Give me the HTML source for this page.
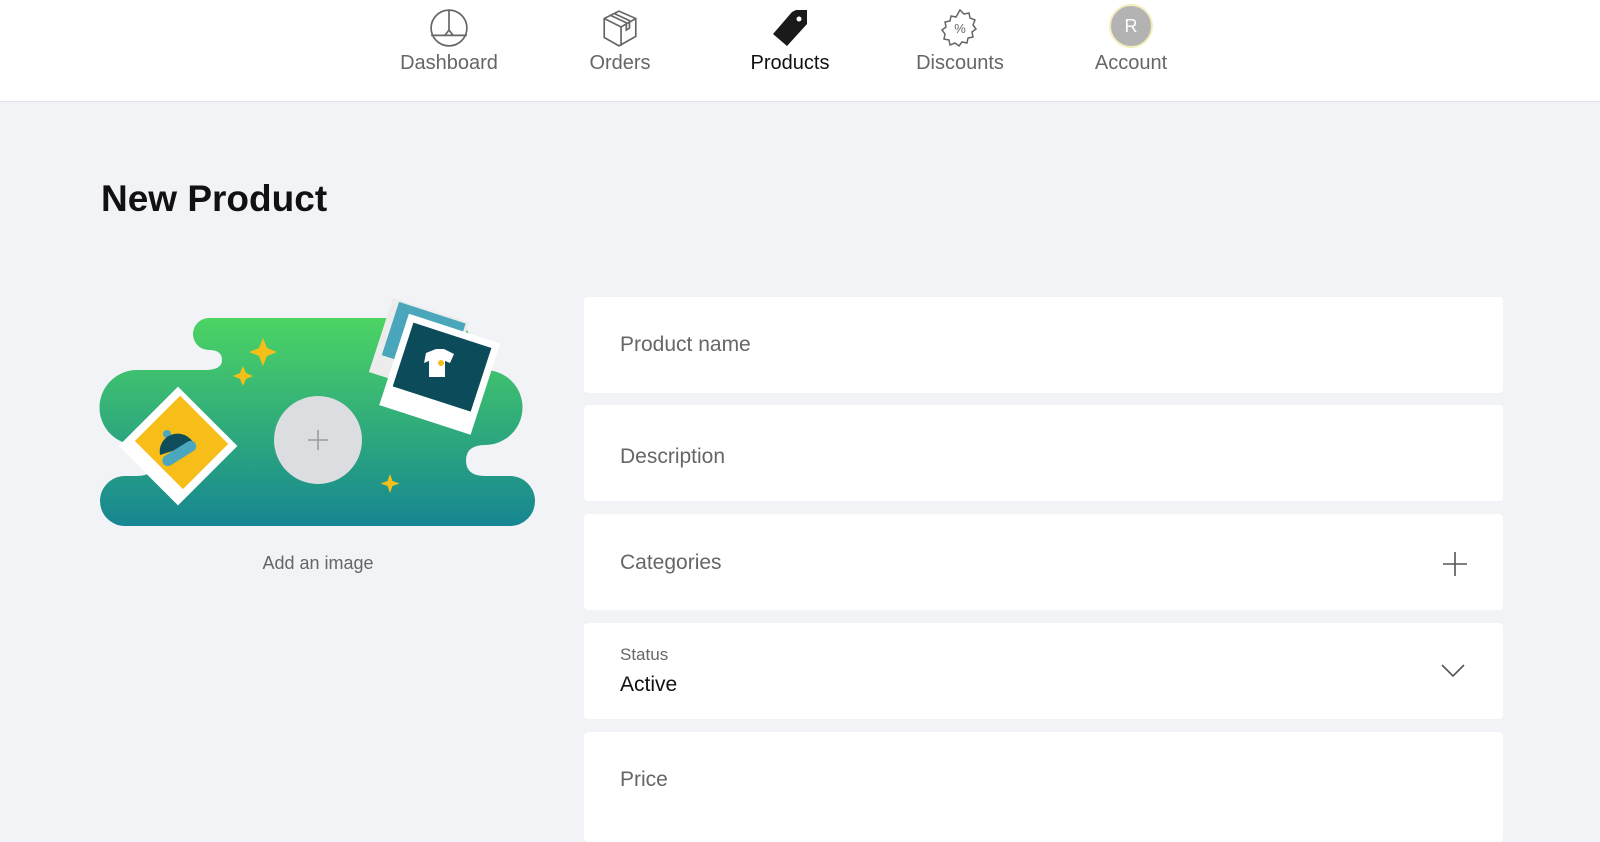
<!DOCTYPE html>
<html><head><meta charset="utf-8"><style>
*{margin:0;padding:0;box-sizing:border-box}
body{width:1600px;height:829px;overflow:hidden;background:#f1f3f6;font-family:"Liberation Sans",sans-serif;position:relative}
.nav{position:absolute;left:0;top:0;width:1600px;height:102px;background:#fff;border-bottom:1px solid #dfe2e6}
.ni{position:absolute;top:0;width:170px;text-align:center;font-size:20px;color:#666}
.ni svg{position:absolute;left:65px;top:8px}
.ni span{position:absolute;top:52px;left:0;width:170px}
h1{position:absolute;left:101px;top:178px;font-size:37px;font-weight:bold;color:#111}
.card{position:absolute;left:584px;width:919px;background:#fff;border-radius:4px}
.lbl{position:absolute;left:36px;font-size:21px;color:#666}
</style></head><body>
<div class="nav">
 <div class="ni" style="left:364px"><svg width="40" height="40" viewBox="0 0 38 38" fill="none" stroke="#666" stroke-width="1.6"><circle cx="19" cy="19" r="17"/><path d="M19 2v7M19 9v12M15 26l4-5 4 5M2 26h34"/></svg><span>Dashboard</span></div>
 <div class="ni" style="left:535px"><svg width="40" height="40" viewBox="0 0 38 38" fill="none" stroke="#666" stroke-width="1.6"><path d="M4 10l14-7 16 7v17l-16 9-14-8z M4 10l16 8 14-8 M20 18v18 M10 7l15 7v7l3-2v-7L13 5"/></svg><span>Orders</span></div>
 <div class="ni" style="left:705px"><svg width="40" height="40" viewBox="0 0 40 40"><path d="M26 2h11v14L17 38 3 26 22 4z" fill="#1a1a1a"/><circle cx="29" cy="11" r="2.5" fill="#fff"/></svg><span style="color:#111">Products</span></div>
 <div class="ni" style="left:875px"><svg width="40" height="40" viewBox="0 0 40 40" fill="none" stroke="#666" stroke-width="1.5"><path d="M20 2l4 4 5-1 1 5 5 2-2 5 3 4-4 3 1 5-5 1-1 5-5-1-3 4-4-3-5 2-1-5-5-1 1-5-3-4 4-3-1-5 5-1 1-5 5 1z"/><text x="20" y="25" font-size="13" text-anchor="middle" fill="#666" stroke="none" font-family="Liberation Sans">%</text></svg><span>Discounts</span></div>
 <div class="ni" style="left:1046px"><div style="position:absolute;left:63px;top:4px;width:44px;height:44px;border-radius:50%;border:2px solid #f3eebc;background:#b3b3b3;color:#fff;font-size:18px;line-height:40px">R</div><span>Account</span></div>
</div>
<h1>New Product</h1>
<svg style="position:absolute;left:0;top:0" width="560" height="600">
<defs><linearGradient id="g" gradientUnits="userSpaceOnUse" x1="0" y1="318" x2="0" y2="526"><stop offset="0" stop-color="#4cd463"/><stop offset="1" stop-color="#168692"/></linearGradient></defs>
<path fill="url(#g)" d="M209 318 H445 A26 26 0 0 1 471 344 V370 H485 A37.5 37.5 0 0 1 485 445 Q466 445 466 460.5 Q466 476 485 476 H510 A25 25 0 0 1 510 526 H125 A25 25 0 0 1 125 476 H137 Q155 476 155 460.5 Q155 445 137 445 A37.5 37.5 0 0 1 137 370 H205 Q222 370 222 360 Q222 350 209 350 A16 16 0 0 1 209 318 Z"/>
<path d="M263 338l4 10 10 4-10 4-4 10-4-10-10-4 10-4z M243 366l3 7 7 3-7 3-3 7-3-7-7-3 7-3z M390 474l2.5 7 7 2.5-7 2.5-2.5 7-2.5-7-7-2.5 7-2.5z" fill="#f5bf19"/>
<g transform="rotate(45 178 446)"><rect x="136" y="404" width="84" height="84" fill="#fff"/><rect x="144" y="409" width="68" height="64" fill="#f7bd18"/></g>
<circle cx="167" cy="434" r="4" fill="#4aa7bd"/>
<path d="M160 455 A18 18 0 0 1 194 444 Z" fill="#0f4d5c"/>
<rect x="160" y="448" width="38" height="11" rx="5.5" transform="rotate(-32 179 453)" fill="#4aa7bd"/>
<g transform="rotate(18 425 345)"><rect x="380" y="310" width="80" height="78" fill="#ececec"/><rect x="387" y="312" width="70" height="56" fill="#4aa7bb"/></g>
<g transform="rotate(18 440 367)"><rect x="394" y="326" width="96" height="96" fill="#fff"/><rect x="401" y="333" width="82" height="67" fill="#0c4b5a"/></g>
<path d="M426 353l10-4h8l10 5-4 9-5-2v16h-16v-16l-5 2z" fill="#fff"/>
<circle cx="441" cy="363" r="3" fill="#f5bf19"/>
<circle cx="318" cy="440" r="44" fill="#dcdde0"/>
<path d="M318 430v20M308 440h20" stroke="#999" stroke-width="1.5"/>
<text x="318" y="569" text-anchor="middle" font-size="18" fill="#666" font-family="Liberation Sans">Add an image</text>
</svg>
<div class="card" style="top:297px;height:96px"><div class="lbl" style="top:36px">Product name</div></div>
<div class="card" style="top:405px;height:96px"><div class="lbl" style="top:40px">Description</div></div>
<div class="card" style="top:514px;height:96px"><div class="lbl" style="top:37px">Categories</div>
<svg style="position:absolute;left:857px;top:36px" width="28" height="28"><path d="M14 2v24M2 14h24" stroke="#555" stroke-width="1.6"/></svg></div>
<div class="card" style="top:623px;height:96px"><div class="lbl" style="top:22px;font-size:17px">Status</div><div class="lbl" style="top:50px;color:#111">Active</div>
<svg style="position:absolute;left:856px;top:40px" width="26" height="16"><path d="M2 2l11 11 11-11" fill="none" stroke="#555" stroke-width="1.6"/></svg></div>
<div class="card" style="top:732px;height:110px"><div class="lbl" style="top:36px">Price</div></div>
</body></html>
